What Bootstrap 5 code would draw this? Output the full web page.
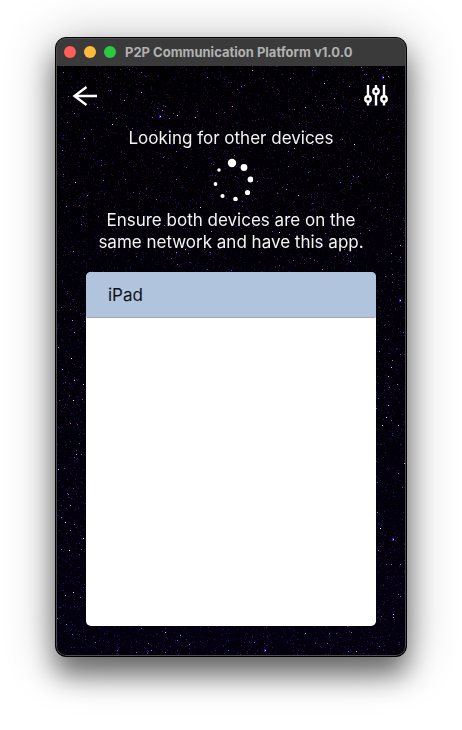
<!DOCTYPE html>
<html lang="en">
<head>
<meta charset="utf-8">
<meta name="viewport" content="width=device-width, initial-scale=1">
<title>P2P Communication Platform v1.0.0</title>
<link rel="stylesheet" href="https://cdn.jsdelivr.net/npm/bootstrap@5.3.0/dist/css/bootstrap.min.css">
<style>
  body { background: #fff; font-family: Inter, "Liberation Sans", sans-serif; padding: 37px 55px 73px; }
  .app-window {
    min-height: calc(100vh - 110px);
    border: 1px solid #000;
    border-radius: 11px;
    background: #020109;
    box-shadow: 0 18px 26px rgba(0,0,0,.48), 0 6px 50px rgba(0,0,0,.32);
  }
  .window-edge { border: 1px solid #4c4b50; border-radius: 10px; pointer-events: none; }
  .title-bar { height: 28px; background: #393a39; padding: 0 8px; gap: 8px; }
  .light { width: 12px; height: 12px; border: 0; padding: 0; border-radius: 50%; }
  .light-close { background: #ff5f57; }
  .light-min { background: #febc3f; }
  .light-max { background: #2bc840; }
  .window-name { font-size: 13px; line-height: 16px; font-weight: 700; color: #b1b1b1; margin-left: 1px; }
  .app-body { padding: 17px 30px 30px; }
  .tool-row { margin: 0 -14px 18px; }
  .icon-btn { width: 26px; height: 26px; }
  .star-canvas { z-index: 0; }
  .above { z-index: 1; }
  .message { font-size: 17px; line-height: 22px; color: #f4f4f4; }
  .spinner-dots { margin: 6px 0 8px; }
  .device-list { background: #fff; border-radius: 5px; margin-top: 19px; }
  .device { height: 46px; padding: 0 22px; font-size: 17px; line-height: 22px; color: #111; background: #b0c4de; border: 0; border-bottom: 1px solid #a8a8a8; border-radius: 5px 5px 2px 2px; }
</style>
<script src="https://cdn.jsdelivr.net/npm/bootstrap@5.3.0/dist/js/bootstrap.bundle.min.js"></script>
</head>
<body class="min-vh-100">
<main class="app-window position-relative overflow-hidden d-flex flex-column">
  <header class="title-bar d-flex align-items-center">
    <button class="light light-close" type="button" aria-label="Close"></button>
    <button class="light light-min" type="button" aria-label="Minimize"></button>
    <button class="light light-max" type="button" aria-label="Zoom"></button>
    <h1 class="window-name mb-0 text-nowrap">P2P Communication Platform v1.0.0</h1>
  </header>
  <section class="app-body position-relative flex-grow-1 d-flex flex-column">
    <canvas class="star-canvas position-absolute top-0 start-0 w-100 h-100" id="stars" aria-hidden="true"></canvas>
    <div class="tool-row above position-relative d-flex justify-content-between">
      <button class="icon-btn btn p-0 border-0 d-flex" type="button" aria-label="Back">
        <svg width="26" height="26" viewBox="0 0 26 26" fill="none" stroke="#fff" stroke-width="2.4"><path d="M25 13H3M14.500 4L2.500 13L14.500 22"/></svg>
      </button>
      <button class="icon-btn btn p-0 border-0 d-flex" type="button" aria-label="Settings">
        <svg width="26" height="26" viewBox="0 0 26 26" fill="none" stroke="#fff" stroke-width="2.4"><path d="M4 2v11M4 19v3.500M12 2v3.500M12 11v11.500M20 2v11M20 19v3.500"/><circle cx="4" cy="16" r="2.700"/><circle cx="12" cy="8.300" r="2.700"/><circle cx="20" cy="16" r="2.700"/></svg>
      </button>
    </div>
    <p class="message above position-relative text-center mb-0">Looking for other devices</p>
    <div class="spinner-dots above position-relative d-flex justify-content-center" role="status" aria-label="Searching">
      <svg width="44" height="46" viewBox="0 0 44 46" fill="#fff"><circle cx="23" cy="8" r="4.200"/><circle cx="35" cy="12.500" r="3.400"/><circle cx="41.500" cy="24.500" r="2.900"/><circle cx="38.500" cy="37.500" r="2.600"/><circle cx="26.500" cy="44" r="2.300"/><circle cx="13.500" cy="41" r="2.100"/><circle cx="6.500" cy="29" r="1.900"/><circle cx="10" cy="15" r="1.700"/></svg>
    </div>
    <p class="message above position-relative text-center mb-0">Ensure both devices are on the<br>same network and have this app.</p>
    <div class="device-list above position-relative flex-grow-1 d-flex flex-column">
      <button class="device w-100 text-start" type="button">iPad</button>
    </div>
  </section>
  <div class="window-edge above position-absolute top-0 start-0 w-100 h-100"></div>
</main>
<script>
  const canvas = document.getElementById('stars');
  const bright = [
    [85,26,'#e6b6ff'],[68,34,'#ff8ac0'],[56,58,'#ffd0e8'],[106,44,'#e070ff'],[121,49,'#f0e8ff'],[139,51,'#d0c8ff'],[28,72,'#e0b0ff'],[19,116,'#e0c8ff'],
    [31,129,'#b070e0'],[120,113,'#d04080'],[144,141,'#f0c0ff'],[155,165,'#9080ff'],[129,183,'#f0c8ff'],[17,185,'#c060d0'],[120,186,'#b060e0'],
    [196,4,'#b090ff'],[268,17,'#d8d0ff'],[332,10,'#e06098'],[176,40,'#ff6090'],[249,41,'#b0a8ff'],[298,78,'#e0d8ff'],[238,82,'#f0a0d0'],
    [230,123,'#f080f0'],[242,129,'#e8a0f0'],[344,179,'#f080f0'],[223,166,'#e8e0ff'],[10,558,'#a060ff'],[95,584,'#c070e0'],[109,566,'#f0a8ff'],
    [124,569,'#9080ff'],[92,577,'#b050a0'],[39,576,'#8050d0'],[133,578,'#c05090'],[300,585,'#b080f0'],[337,548,'#f0b0e8'],[337,551,'#d080e0'],[249,567,'#e080b0'],
    [2,281,'#d080e0'],[16,254,'#e080ff'],[18,266,'#d060c0'],[15,292,'#e8d0ff'],[6,303,'#c060e0'],[18,314,'#d090e0'],[27,318,'#f0b0f0'],[17,334,'#f0e8ff'],[14,357,'#c050b0'],
    [20,388,'#f090d0'],[25,388,'#a050a0'],[2,403,'#c0b8ff'],[12,428,'#b070e0'],[14,439,'#c050c0'],[5,451,'#9060ff'],[9,456,'#f0e0ff'],[27,472,'#f0e0ff'],[13,484,'#f0e8ff'],[17,526,'#f0c0ff'],[9,529,'#e080e0'],
    [323,285,'#b060c0'],[336,294,'#e06090'],[335,301,'#c0c0ff'],[332,310,'#f0a0ff'],[341,318,'#b070d0'],[332,339,'#e090e0'],[330,351,'#ffd0ff'],[326,359,'#f0c0f0'],[342,359,'#c090ff'],
    [348,397,'#ff90a0'],[324,462,'#ffd0ff'],[342,407,'#b050a0'],[322,484,'#c050b0'],[344,498,'#b060b0'],[335,498,'#b060e0'],[342,528,'#a050a0']
  ];
  const glows = [[104,50],[327,11],[344,234],[209,584],[337,473]];
  function drawStars() {
    const w = canvas.width = canvas.clientWidth;
    const h = canvas.height = canvas.clientHeight;
    const c = canvas.getContext('2d');
    let seed = 4127;
    const rnd = () => (seed = (seed * 16807) % 2147483647) / 2147483647;
    const fill = c.createLinearGradient(0, 0, 0, h);
    fill.addColorStop(0, '#010003');
    fill.addColorStop(1, '#03010e');
    c.fillStyle = fill;
    c.fillRect(0, 0, w, h);
    const hues = ['90,30,190', '120,35,150', '55,35,210', '150,50,130', '100,60,220'];
    for (let i = 0; i < w * h / 10; i++) {
      const strength = Math.pow(rnd(), 4);
      c.fillStyle = `rgba(${hues[Math.floor(rnd() * 5)]},${0.08 + 0.5 * strength})`;
      c.fillRect(Math.floor(rnd() * w), Math.floor(rnd() * h), 1, 1);
    }
    for (let i = 0; i < w * h / 520; i++) {
      c.fillStyle = ['#7940bd', '#a34db2', '#5a42d0', '#9151e0', '#872f70'][Math.floor(rnd() * 5)];
      c.fillRect(Math.floor(rnd() * w), Math.floor(rnd() * h), 1, 1);
    }
    for (const [x, y] of glows) {
      c.fillStyle = '#3418c4';
      c.fillRect(x - 1, y - 1, 2, 3);
      c.fillStyle = '#cfc4ff';
      c.fillRect(x, y, 1, 1);
    }
    for (const [x, y, color] of bright) {
      c.fillStyle = color;
      c.fillRect(x, y, 1, 1);
    }
  }
  drawStars();
  addEventListener('resize', drawStars);
</script>
</body>
</html>
